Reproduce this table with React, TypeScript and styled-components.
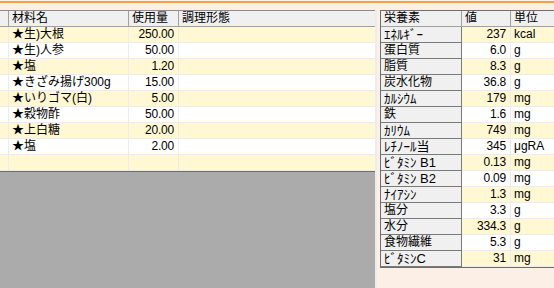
import React from 'react';
import styled, { createGlobalStyle } from 'styled-components';

const GlobalStyle = createGlobalStyle`
  html, body {
    margin: 0;
    padding: 0;
    background: #fcf0e6;
    overflow: hidden;
  }
  body {
    font-family: "Liberation Sans", "Noto Sans CJK JP", sans-serif;
    font-size: 12px;
    color: #000;
  }
`;

const ingredients = [
  { name: '★生)大根', amount: '250.00' },
  { name: '★生)人参', amount: '50.00' },
  { name: '★塩', amount: '1.20' },
  { name: '★きざみ揚げ300g', amount: '15.00' },
  { name: '★いりゴマ(白)', amount: '5.00' },
  { name: '★穀物酢', amount: '50.00' },
  { name: '★上白糖', amount: '20.00' },
  { name: '★塩', amount: '2.00' },
  { name: '', amount: '' },
];

const nutrients = [
  { name: 'ｴﾈﾙｷﾞｰ', value: '237', unit: 'kcal' },
  { name: '蛋白質', value: '6.0', unit: 'g' },
  { name: '脂質', value: '8.3', unit: 'g' },
  { name: '炭水化物', value: '36.8', unit: 'g' },
  { name: 'ｶﾙｼｳﾑ', value: '179', unit: 'mg' },
  { name: '鉄', value: '1.6', unit: 'mg' },
  { name: 'ｶﾘｳﾑ', value: '749', unit: 'mg' },
  { name: 'ﾚﾁﾉｰﾙ当', value: '345', unit: 'μgRA' },
  { name: 'ﾋﾞﾀﾐﾝ B1', value: '0.13', unit: 'mg' },
  { name: 'ﾋﾞﾀﾐﾝ B2', value: '0.09', unit: 'mg' },
  { name: 'ﾅｲｱｼﾝ', value: '1.3', unit: 'mg' },
  { name: '塩分', value: '3.3', unit: 'g' },
  { name: '水分', value: '334.3', unit: 'g' },
  { name: '食物繊維', value: '5.3', unit: 'g' },
  { name: 'ﾋﾞﾀﾐﾝC', value: '31', unit: 'mg' },
];

const Page = styled.div`
  width: 554px;
  height: 288px;
  display: flex;
  flex-direction: column;
  overflow: hidden;
`;

const TopRule = styled.div`
  height: 2px;
  margin-top: 1px;
  background: #f7a14c;
  flex: none;
`;

const Main = styled.div`
  flex: 1;
  display: flex;
  gap: 3px;
  padding-top: 7px;
  min-height: 0;
  overflow: hidden;
`;

const LeftPanel = styled.div`
  flex: none;
  width: 375px;
  background: #ababab;
  border-right: 2px solid #ececec;
  display: flex;
  flex-direction: column;
`;

const RecipeGrid = styled.div`
  display: grid;
  grid-template-columns: 9px 120px 50px 1fr;
  grid-auto-rows: 16px;
  border-top: 1px solid #8c8c8c;
  border-bottom: 1px solid #6e6e6e;
`;

const HeadCell = styled.div<{ $last?: boolean }>`
  background: #f0f0f0;
  border-right: ${(p) => (p.$last ? '0' : '1px solid #a0a0a0')};
  border-bottom: 1px solid #a0a0a0;
  padding-left: 3px;
  line-height: 15px;
  white-space: nowrap;
  overflow: hidden;
`;

const Cell = styled.div<{ $odd: boolean; $right?: boolean; $last?: boolean }>`
  background: ${(p) => (p.$odd ? '#fff8d2' : '#ffffff')};
  border-right: ${(p) => (p.$last ? '0' : '1px solid #ececec')};
  border-bottom: 1px solid #ececec;
  padding: ${(p) => (p.$right ? '0 4px 0 0' : '0 0 0 3px')};
  text-align: ${(p) => (p.$right ? 'right' : 'left')};
  line-height: 15px;
  white-space: nowrap;
  overflow: hidden;
`;

const NutritionGrid = styled.div`
  flex: none;
  align-self: flex-start;
  display: grid;
  grid-template-columns: 81px 49px 60px;
  grid-auto-rows: 16px;
  border-top: 1px solid #6e6e6e;
  border-left: 1px solid #6e6e6e;
  border-bottom: 1px solid #6e6e6e;
`;

const NameCell = styled.div<{ $kana: boolean }>`
  background: #f0f0f0;
  border-right: 1px solid #7a7a7a;
  border-bottom: 1px solid #7a7a7a;
  padding-left: 3px;
  font-size: ${(p) => (p.$kana ? '13px' : '12px')};
  line-height: 15px;
  white-space: nowrap;
  overflow: hidden;
`;

const Amount = styled.span`
  letter-spacing: -0.2px;
`;

const isHalfKana = (s: string) => /[\uFF61-\uFF9F]/.test(s);

export default function App() {
  return (
    <>
      <GlobalStyle />
      <Page>
        <TopRule />
        <Main>
          <LeftPanel>
            <RecipeGrid>
              <HeadCell />
              <HeadCell>材料名</HeadCell>
              <HeadCell>使用量</HeadCell>
              <HeadCell $last>調理形態</HeadCell>
              {ingredients.map((row, i) => (
                <React.Fragment key={i}>
                  <Cell $odd={i % 2 === 0} />
                  <Cell $odd={i % 2 === 0}>{row.name}</Cell>
                  <Cell $odd={i % 2 === 0} $right>
                    <Amount>{row.amount}</Amount>
                  </Cell>
                  <Cell $odd={i % 2 === 0} $last />
                </React.Fragment>
              ))}
            </RecipeGrid>
          </LeftPanel>
          <NutritionGrid>
            <HeadCell>栄養素</HeadCell>
            <HeadCell>値</HeadCell>
            <HeadCell $last>単位</HeadCell>
            {nutrients.map((row, i) => (
              <React.Fragment key={row.name}>
                <NameCell $kana={isHalfKana(row.name)}>{row.name}</NameCell>
                <Cell $odd={i % 2 === 0} $right>
                  <Amount>{row.value}</Amount>
                </Cell>
                <Cell $odd={i % 2 === 0} $last>
                  {row.unit}
                </Cell>
              </React.Fragment>
            ))}
          </NutritionGrid>
        </Main>
      </Page>
    </>
  );
}
